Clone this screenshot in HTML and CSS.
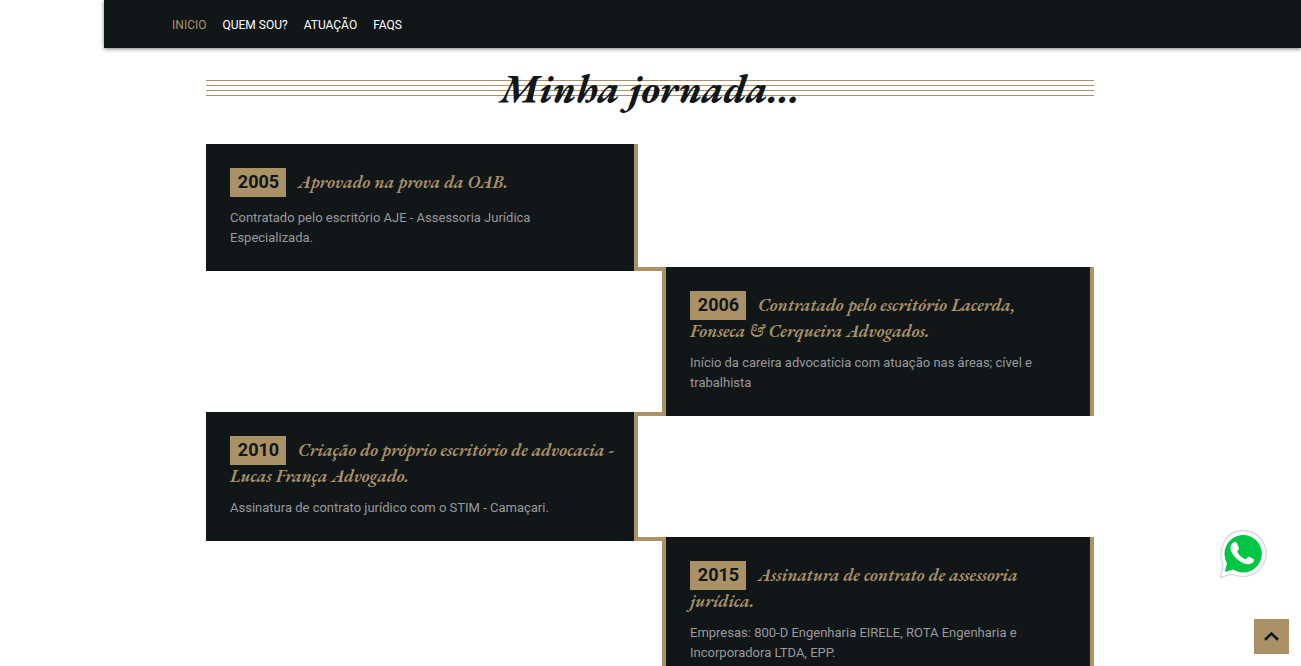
FILE: index.html
```
<!DOCTYPE html>
<html lang="pt-BR">
<head>
<meta charset="utf-8">
<meta name="viewport" content="width=device-width, initial-scale=1">
<title>Minha jornada</title>
<link rel="stylesheet" href="styles.css">
</head>
<body>
<header class="topbar">
  <nav class="menu">
    <a class="menu-link active" href="#inicio">INICIO</a>
    <a class="menu-link" href="#quem-sou">QUEM SOU?</a>
    <a class="menu-link" href="#atuacao">ATUAÇÃO</a>
    <a class="menu-link" href="#faqs">FAQS</a>
  </nav>
</header>
<main class="journey">
  <h1 class="journey-title">Minha jornada...</h1>
  <section class="timeline">
    <article class="card">
      <h2 class="card-title"><span class="year">2005</span>Aprovado na prova da OAB.</h2>
      <p class="card-text">Contratado pelo escritório AJE - Assessoria Jurídica Especializada.</p>
    </article>
    <article class="card card-right">
      <h2 class="card-title"><span class="year">2006</span>Contratado pelo escritório Lacerda, Fonseca &amp; Cerqueira Advogados.</h2>
      <p class="card-text">Início da careira advocatícia com atuação nas áreas; cível e trabalhista</p>
    </article>
    <article class="card">
      <h2 class="card-title"><span class="year">2010</span>Criação do próprio escritório de advocacia - Lucas França Advogado.</h2>
      <p class="card-text">Assinatura de contrato jurídico com o STIM - Camaçari.</p>
    </article>
    <article class="card card-right">
      <h2 class="card-title"><span class="year">2015</span>Assinatura de contrato de assessoria jurídica.</h2>
      <p class="card-text">Empresas: 800-D Engenharia EIRELE, ROTA Engenharia e Incorporadora LTDA, EPP.</p>
    </article>
  </section>
</main>
<a class="whatsapp" href="#whatsapp" aria-label="WhatsApp">
  <svg viewBox="0 0 48 50" width="48" height="50" aria-hidden="true">
    <path d="M1 48.500 4 36.500C-2 21 6 1.500 24 1.500A23 23 0 0 1 24 47.500Q18 47.500 13 45.200Z" fill="#fff" stroke="#d3dbdf" stroke-width="1.300" stroke-linejoin="round"/>
    <path d="M6 43 7.900 34A18.700 18.700 0 1 1 14.200 40.600Z" fill="#00c644"/>
    <path d="M12.800 15.200C14.500 12.600 17.100 12.500 18 14.200L19.900 18.900C20.200 20.200 18.800 21.500 18.100 22.500C19.700 26 22.700 28.800 26.600 30.400C27.700 29.400 28.800 27.400 30.200 27.700L34.500 29.900C35.600 30.700 34.800 33.100 33.200 34.100C29.700 36.400 25 34.900 20.500 31.900C16.200 29 11.400 23.400 11.500 19C11.500 17.600 12 16.300 12.800 15.200Z" fill="#fff"/>
  </svg>
</a>
<a class="to-top" href="#inicio" aria-label="Voltar ao topo">
  <svg viewBox="0 0 16 10" width="16" height="10" aria-hidden="true"><path d="M1 7.800 7.500 1.600 14 7.800" fill="none" stroke="#111619" stroke-width="2.600"/></svg>
</a>
</body>
</html>
```
FILE: styles.css
```
* {
  box-sizing: border-box;
}

body {
  margin: 0;
  background: #fff;
  font-family: Roboto, "Liberation Sans", sans-serif;
  color: #111619;
  height: 100vh;
  overflow: hidden;
}

.topbar {
  margin-left: 8%;
  height: 48px;
  padding: 2px 0 0 68px;
  background: #111619;
  box-shadow: 0 1px 4px rgba(0, 0, 0, 0.5);
}

.menu {
  display: flex;
  align-items: center;
  gap: 16px;
  height: 100%;
}

.menu-link {
  font-size: 12px;
  line-height: 18px;
  color: #fff;
  text-decoration: none;
}

.menu-link.active {
  color: #aa9166;
}

.journey {
  max-width: 889px;
  margin: 0 auto;
  padding-right: 1px;
}

.journey-title {
  margin: 0;
  padding: 16px 0 32px;
  font-family: "EB Garamond", "Liberation Serif", serif;
  font-size: 40px;
  line-height: 48px;
  font-style: italic;
  text-align: center;
  background: repeating-linear-gradient(#aa9166 0 1px, transparent 1px 5px) 0 32px / 100% 16px no-repeat;
}

.timeline {
  display: flex;
  flex-direction: column;
  align-items: flex-start;
}

.card {
  position: relative;
  width: calc(50% - 12px);
  padding: 24px 24px 23px;
  background: #111619;
  border-right: 4px solid #aa9166;
}

.card + .card {
  margin-top: -4px;
}

.card-right {
  align-self: flex-end;
  border-left: 4px solid #aa9166;
}

/* Bars joining neighbouring cards across the central gutter */
.card-right::before,
.card + .card:not(.card-right)::after {
  content: "";
  position: absolute;
  top: 0;
  width: 24px;
  height: 4px;
  background: #aa9166;
}

.card-right::before {
  right: calc(100% + 4px);
}

.card + .card:not(.card-right)::after {
  left: calc(100% + 4px);
}

.card-title {
  min-height: 32px;
  margin: 0 -6px 8px 0;
  padding: 1px 0;
  font-family: "EB Garamond", "Liberation Serif", serif;
  font-size: 18px;
  line-height: 26px;
  font-style: italic;
  font-weight: 600;
  color: #aa9166;
}

.year {
  display: inline-block;
  width: 56px;
  margin: -1px 12px -2px 0;
  padding: 2px 0 3px 1px;
  vertical-align: top;
  text-align: center;
  background: #aa9166;
  color: #111619;
  font-family: Roboto, "Liberation Sans", sans-serif;
  font-size: 18px;
  line-height: 24px;
  font-style: normal;
  font-weight: 700;
}

.card-text {
  margin: 0;
  font-size: 13px;
  line-height: 20px;
  color: #999;
}

.whatsapp {
  position: fixed;
  right: 34px;
  bottom: 87px;
  width: 48px;
  height: 50px;
}

.whatsapp svg {
  display: block;
}

.to-top {
  position: fixed;
  right: 12px;
  bottom: 12px;
  display: flex;
  align-items: center;
  justify-content: center;
  width: 35px;
  height: 35px;
  background: #aa9166;
}
```
